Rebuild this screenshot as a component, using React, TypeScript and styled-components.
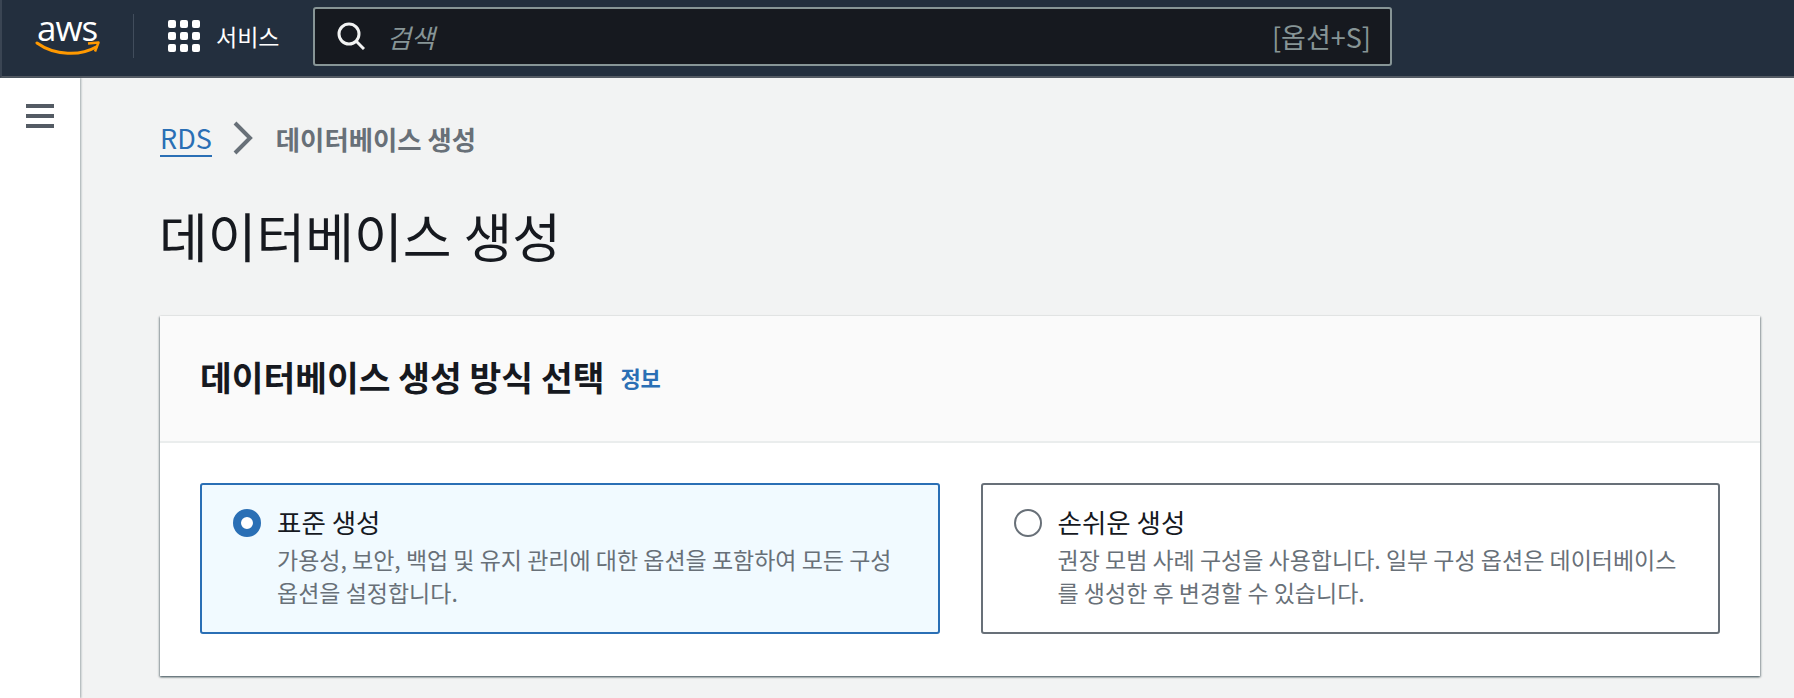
import React from 'react';
import styled, { createGlobalStyle } from 'styled-components';

const GlobalStyle = createGlobalStyle`
  html, body {
    margin: 0;
    height: 100%;
    overflow: hidden;
    background: #f2f3f3;
    font-family: "Noto Sans CJK KR", "Noto Sans", sans-serif;
  }
`;

const Page = styled.div`
  width: 1794px;
  height: 698px;
  display: flex;
  flex-direction: column;
  overflow: hidden;
`;

const TopBar = styled.header`
  height: 72px;
  padding-bottom: 4px;
  flex: none;
  display: flex;
  align-items: center;
  background: #232f3e;
  border-bottom: 2px solid #545b64;
  border-left: 2px solid #3a4553;
`;

const Logo = styled.div`
  width: 98px;
  margin-left: 33px;
  flex: none;
  position: relative;
  height: 48px;
`;

const LogoText = styled.span`
  position: absolute;
  left: 2px;
  top: -8px;
  font-family: "Open Sans", sans-serif;
  font-size: 35px;
  line-height: 48px;
  letter-spacing: -1px;
  color: #fff;
`;

const LogoSmile = styled.svg`
  position: absolute;
  left: 0;
  top: 26px;
`;

const Divider = styled.div`
  width: 1px;
  height: 44px;
  background: #414d5c;
  flex: none;
`;

const Services = styled.div`
  display: flex;
  align-items: center;
  gap: 16px;
  margin-left: 34px;
  width: 145px;
  flex: none;
  font-size: 23px;
  color: #fff;
`;

const Grid = styled.div`
  display: grid;
  grid-template-columns: repeat(3, 8px);
  grid-auto-rows: 8px;
  gap: 4px;
`;

const Dot = styled.i`
  display: block;
  border-radius: 2px;
  background: #fff;
`;

const SearchBox = styled.div`
  width: 1079px;
  height: 59px;
  box-sizing: border-box;
  flex: none;
  display: flex;
  align-items: center;
  padding: 0 19px 0 22px;
  background: #16191f;
  border: 2px solid #879596;
  border-radius: 3px;
`;

const SearchHint = styled.span`
  flex: 1;
  margin-left: 22px;
  font-size: 26px;
  font-style: italic;
  color: #879596;
`;

const Shortcut = styled.span`
  font-size: 27px;
  color: #879596;
`;

const Body = styled.div`
  flex: 1;
  display: flex;
  min-height: 0;
`;

const Sidebar = styled.aside`
  width: 80px;
  flex: none;
  background: #fff;
  box-shadow: 1px 0 2px rgba(0, 28, 36, 0.35);
  padding-top: 26px;
  box-sizing: border-box;
`;

const Burger = styled.div`
  margin-left: 26px;
  width: 28px;
  display: flex;
  flex-direction: column;
  gap: 6px;
`;

const BurgerLine = styled.i`
  display: block;
  height: 4px;
  background: #545b64;
`;

const Main = styled.main`
  flex: 1;
  padding: 42px 34px 0 80px;
`;

const Crumbs = styled.nav`
  display: flex;
  align-items: center;
  height: 36px;
  font-size: 26.400px;
`;

const CrumbLink = styled.a`
  color: #2a6fb5;
  border-bottom: 2px solid #2a6fb5;
  font-size: 27px;
  line-height: 33px;
  height: 34px;
  margin-top: 2px;
`;

const CrumbIcon = styled.svg`
  margin: 0 23px 0 21px;
`;

const CrumbText = styled.span`
  color: #687078;
  font-weight: 700;
`;

const Title = styled.h1`
  margin: 41px 0 0 -1px;
  font-size: 53px;
  line-height: 76px;
  font-weight: 400;
  color: #16191f;
`;

const Card = styled.section`
  margin-top: 43px;
  height: 360px;
  background: #fff;
  box-shadow: 0 1px 2px rgba(0, 28, 36, 0.5), 1px 1px 2px rgba(0, 28, 36, 0.25), -1px 1px 2px rgba(0, 28, 36, 0.25);
`;

const CardHeader = styled.div`
  height: 127px;
  box-sizing: border-box;
  display: flex;
  align-items: center;
  gap: 16px;
  padding: 0 40px 6px;
  background: #fafafa;
  border-bottom: 2px solid #eaeded;
`;

const CardTitle = styled.h2`
  margin: 0;
  font-size: 34.500px;
  font-weight: 700;
  color: #16191f;
`;

const InfoLink = styled.a`
  margin-top: 3px;
  font-size: 22px;
  font-weight: 700;
  color: #2a6fb5;
`;

const Options = styled.div`
  display: grid;
  grid-template-columns: 1fr 1fr;
  gap: 41px;
  padding: 40px 40px 0;
`;

const Option = styled.div<{ selected?: boolean }>`
  height: 151px;
  box-sizing: border-box;
  display: flex;
  gap: 16px;
  padding: 19px 34px 19px 31px;
  border: 2px solid ${(p) => (p.selected ? '#2a6fb5' : '#687078')};
  border-radius: 3px;
  background: ${(p) => (p.selected ? '#f1faff' : '#fff')};
`;

const Radio = styled.span<{ selected?: boolean }>`
  width: 28px;
  height: 28px;
  margin-top: 5px;
  flex: none;
  box-sizing: border-box;
  border-radius: 50%;
  border: ${(p) => (p.selected ? '8px solid #2a6fb5' : '2px solid #687078')};
  background: #fff;
`;

const OptionTitle = styled.div`
  font-size: 26.500px;
  line-height: 36px;
  color: #16191f;
`;

const OptionText = styled.div`
  margin-top: 3px;
  font-size: 23px;
  line-height: 33px;
  color: #687078;
`;

const App: React.FC = () => (
  <Page>
    <GlobalStyle />
    <TopBar>
      <Logo>
        <LogoText>aws</LogoText>
        <LogoSmile width="66" height="20" viewBox="0 0 66 20" fill="none">
          <path d="M2 5C20 18 46 18 61 9" stroke="#ff9900" strokeWidth="3" strokeLinecap="round" />
          <path d="M53 5.500L63.500 4.500L60 13.500" stroke="#ff9900" strokeWidth="2.500" strokeLinejoin="round" />
        </LogoSmile>
      </Logo>
      <Divider />
      <Services>
        <Grid>
          {Array.from({ length: 9 }, (_, i) => <Dot key={i} />)}
        </Grid>
        서비스
      </Services>
      <SearchBox>
        <svg width="28" height="28" viewBox="0 0 28 28" fill="none">
          <circle cx="12" cy="12" r="10" stroke="#f2f3f3" strokeWidth="3" />
          <path d="M19 19L27 27" stroke="#f2f3f3" strokeWidth="3" />
        </svg>
        <SearchHint>검색</SearchHint>
        <Shortcut>[옵션+S]</Shortcut>
      </SearchBox>
    </TopBar>
    <Body>
      <Sidebar>
        <Burger>
          <BurgerLine />
          <BurgerLine />
          <BurgerLine />
        </Burger>
      </Sidebar>
      <Main>
        <Crumbs>
          <CrumbLink>RDS</CrumbLink>
          <CrumbIcon width="20" height="34" viewBox="0 0 20 34" fill="none">
            <path d="M2 2L17 17L2 32" stroke="#687078" strokeWidth="4" />
          </CrumbIcon>
          <CrumbText>데이터베이스 생성</CrumbText>
        </Crumbs>
        <Title>데이터베이스 생성</Title>
        <Card>
          <CardHeader>
            <CardTitle>데이터베이스 생성 방식 선택</CardTitle>
            <InfoLink>정보</InfoLink>
          </CardHeader>
          <Options>
            <Option selected>
              <Radio selected />
              <div>
                <OptionTitle>표준 생성</OptionTitle>
                <OptionText>가용성, 보안, 백업 및 유지 관리에 대한 옵션을 포함하여 모든 구성 옵션을 설정합니다.</OptionText>
              </div>
            </Option>
            <Option>
              <Radio />
              <div>
                <OptionTitle>손쉬운 생성</OptionTitle>
                <OptionText>권장 모범 사례 구성을 사용합니다. 일부 구성 옵션은 데이터베이스를 생성한 후 변경할 수 있습니다.</OptionText>
              </div>
            </Option>
          </Options>
        </Card>
      </Main>
    </Body>
  </Page>
);

export default App;
